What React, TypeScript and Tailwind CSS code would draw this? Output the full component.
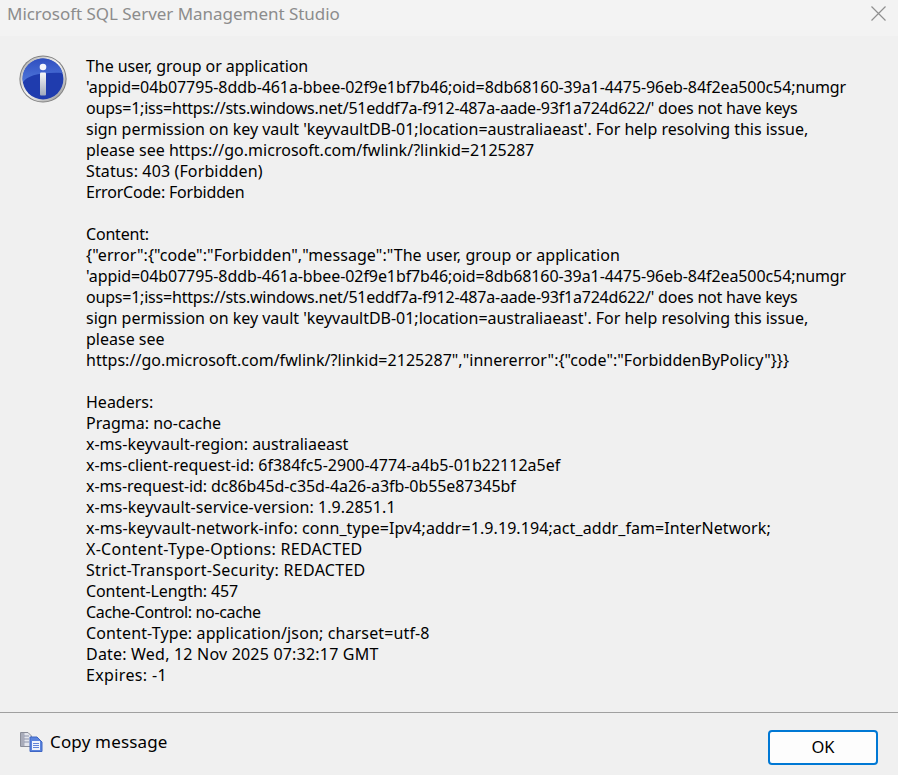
const lines: [string, string][] = [
  ["The user, group or application", "tracking-[-0.07px]"],
  ["'appid=04b07795-8ddb-461a-bbee-02f9e1bf7b46;oid=8db68160-39a1-4475-96eb-84f2ea500c54;numgr", "tracking-[-0.09px]"],
  ["oups=1;iss=https://sts.windows.net/51eddf7a-f912-487a-aade-93f1a724d622/' does not have keys", "tracking-[-0.21px]"],
  ["sign permission on key vault 'keyvaultDB-01;location=australiaeast'. For help resolving this issue,", "tracking-[-0.02px]"],
  ["please see https://go.microsoft.com/fwlink/?linkid=2125287", "tracking-[0.02px]"],
  ["Status: 403 (Forbidden)", "tracking-[0.13px]"],
  ["ErrorCode: Forbidden", "tracking-[-0.2px]"],
  ["", ""],
  ["Content:", "tracking-[-0.2px]"],
  ['{"error":{"code":"Forbidden","message":"The user, group or application', "tracking-[0.07px]"],
  ["'appid=04b07795-8ddb-461a-bbee-02f9e1bf7b46;oid=8db68160-39a1-4475-96eb-84f2ea500c54;numgr", "tracking-[-0.09px]"],
  ["oups=1;iss=https://sts.windows.net/51eddf7a-f912-487a-aade-93f1a724d622/' does not have keys", "tracking-[-0.21px]"],
  ["sign permission on key vault 'keyvaultDB-01;location=australiaeast'. For help resolving this issue,", "tracking-[-0.02px]"],
  ["please see", ""],
  ['https://go.microsoft.com/fwlink/?linkid=2125287","innererror":{"code":"ForbiddenByPolicy"}}}', "tracking-[0.03px]"],
  ["", ""],
  ["Headers:", ""],
  ["Pragma: no-cache", ""],
  ["x-ms-keyvault-region: australiaeast", ""],
  ["x-ms-client-request-id: 6f384fc5-2900-4774-a4b5-01b22112a5ef", ""],
  ["x-ms-request-id: dc86b45d-c35d-4a26-a3fb-0b55e87345bf", "tracking-[-0.08px]"],
  ["x-ms-keyvault-service-version: 1.9.2851.1", "tracking-[0.07px]"],
  ["x-ms-keyvault-network-info: conn_type=Ipv4;addr=1.9.19.194;act_addr_fam=InterNetwork;", "tracking-[0.08px]"],
  ["X-Content-Type-Options: REDACTED", "tracking-[0.28px]"],
  ["Strict-Transport-Security: REDACTED", "tracking-[0.29px]"],
  ["Content-Length: 457", "tracking-[-0.1px]"],
  ["Cache-Control: no-cache", "tracking-[-0.35px]"],
  ["Content-Type: application/json; charset=utf-8", "tracking-[0.13px]"],
  ["Date: Wed, 12 Nov 2025 07:32:17 GMT", "tracking-[0.2px]"],
  ["Expires: -1", "tracking-[0.36px]"],
];

function InfoIcon() {
  return (
    <svg width="48" height="48" viewBox="0 0 48 48" className="shrink-0">
      <defs>
        <linearGradient id="ring" x1="0" y1="0" x2="1" y2="1">
          <stop offset="0" stopColor="#a8a8a8" />
          <stop offset="0.5" stopColor="#f5f5f5" />
          <stop offset="1" stopColor="#8f8f8f" />
        </linearGradient>
        <linearGradient id="stem" x1="0" y1="0" x2="0" y2="1">
          <stop offset="0" stopColor="#f8f8f8" />
          <stop offset="1" stopColor="#9fa9bd" />
        </linearGradient>
        <linearGradient id="glow" x1="0" y1="0" x2="0" y2="1">
          <stop offset="0" stopColor="#2f4fc0" />
          <stop offset="1" stopColor="#4f76da" />
        </linearGradient>
      </defs>
      <circle cx="24" cy="24" r="23.6" fill="#808080" />
      <circle cx="24" cy="24" r="22.6" fill="url(#ring)" />
      <circle cx="24" cy="24" r="20.4" fill="#1f3cae" />
      <path d="M4.2 27 C8 21 20 17 43.6 18 C41 9 33 3.6 24 3.6 C12.7 3.6 3.6 12.7 3.6 24 C3.6 25 3.8 26 4.2 27 Z" fill="url(#glow)" />
      <circle cx="24" cy="12" r="3.3" fill="#f4f6fb" />
      <rect x="21" y="17.5" width="6" height="23" rx="1" fill="url(#stem)" />
    </svg>
  );
}

function CopyIcon() {
  return (
    <svg width="23" height="20" viewBox="0 0 23 20" className="shrink-0">
      <path d="M0.5 0.5 H8 L11.5 4 V14.5 H0.5 Z" fill="#e3e5ec" stroke="#8a8d99" />
      <rect x="1" y="1" width="3.5" height="13" fill="#a9acba" />
      <path d="M4 4 H9 M4 7 H9 M4 10 H9" stroke="#8e95ad" />
      <path d="M10 5 H17 L22 10 V19.5 H10 Z" fill="#5a83dd" stroke="#3f66c4" />
      <rect x="12" y="9" width="8" height="9" fill="#eef3fc" />
      <path d="M13 11.5 H19 M13 13.5 H19 M13 15.5 H19" stroke="#5f83d8" />
    </svg>
  );
}

export default function App() {
  return (
    <div
      className="w-[898px] h-[775px] flex flex-col overflow-hidden bg-[#f0f0f0] text-[#000000] text-[16px]"
      style={{ fontFamily: '"Noto Sans", "Open Sans", sans-serif' }}
    >
      <div className="h-[36px] shrink-0 bg-[#f3f3f3] flex items-start justify-between pl-[7px] pr-[12px]">
        <span className="text-[17px] leading-[27px] tracking-[-0.03px] text-[#8c8c8c]">Microsoft SQL Server Management Studio</span>
        <svg width="15" height="15" viewBox="0 0 15 15" className="mt-[6px]">
          <path d="M0.5 0.5 L14.5 14.5 M14.5 0.5 L0.5 14.5" stroke="#8f8f8f" strokeWidth="1.2" />
        </svg>
      </div>
      <div className="flex-1 flex items-start pl-[19px] pt-[19px] gap-[19px] min-h-0">
        <InfoIcon />
        <div className="leading-[21px] whitespace-pre pt-[1px]">
          {lines.map(([l, t], i) => (
            <div key={i} className={`h-[21px] ${t}`}>{l}</div>
          ))}
        </div>
      </div>
      <div className="h-[63px] shrink-0 border-t border-[#a0a0a0] flex items-start justify-between pl-[20px] pr-[20px]">
        <div className="flex items-center gap-[7px] mt-[16px] text-[17px] tracking-[0.17px]">
          <CopyIcon />
          <span>Copy message</span>
        </div>
        <button className="w-[110px] h-[35px] mt-[17px] bg-[#fdfdfd] border-2 border-[#0078d4] rounded-[4px] text-[16.5px] text-black">
          OK
        </button>
      </div>
    </div>
  );
}
